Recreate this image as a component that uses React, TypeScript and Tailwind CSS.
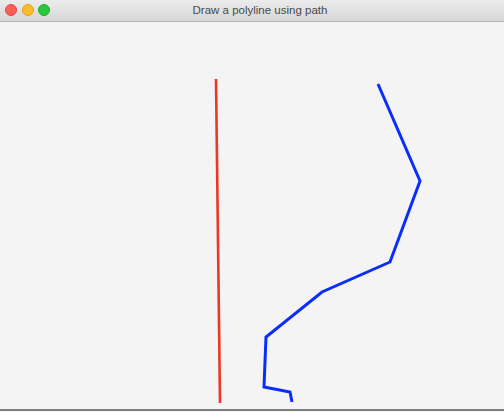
import React from "react";

export default function App() {
  return (
    <div className="w-[504px] h-[412px] flex flex-col bg-[#f4f4f4] overflow-hidden" style={{ fontFamily: '"Liberation Sans", Arial, sans-serif' }}>
      <div className="relative h-[22px] shrink-0 flex items-center justify-center bg-gradient-to-b from-[#ececec] to-[#d6d6d6] border-b border-[#b4b4b4]">
        <div className="absolute left-[5px] top-[4px] flex gap-[4.5px]">
          <div className="w-[12px] h-[12px] rounded-full bg-[#fc5f57] border border-[#e14942]" />
          <div className="w-[12px] h-[12px] rounded-full bg-[#fdbc2e] border border-[#dfa025]" />
          <div className="w-[12px] h-[12px] rounded-full bg-[#29c83f] border border-[#1dad2b]" />
        </div>
        <span className="text-[11.5px] text-[#4a4a4a] ml-[16px]">Draw a polyline using path</span>
      </div>
      <div className="flex-1 flex flex-col">
        <svg width="504" height="387" viewBox="0 22 504 387" className="block">
          <line x1="216" y1="79" x2="220" y2="403" stroke="#ec3726" strokeWidth="2.6" />
          <polyline
            points="378,84 420,181 390,262 322,292 266,337 264,387 290,392 292,402"
            fill="none"
            stroke="#0a2dff"
            strokeWidth="3"
            strokeLinejoin="miter"
          />
        </svg>
        <div className="h-[2px] bg-[#7f7f7f] shrink-0" />
      </div>
    </div>
  );
}
